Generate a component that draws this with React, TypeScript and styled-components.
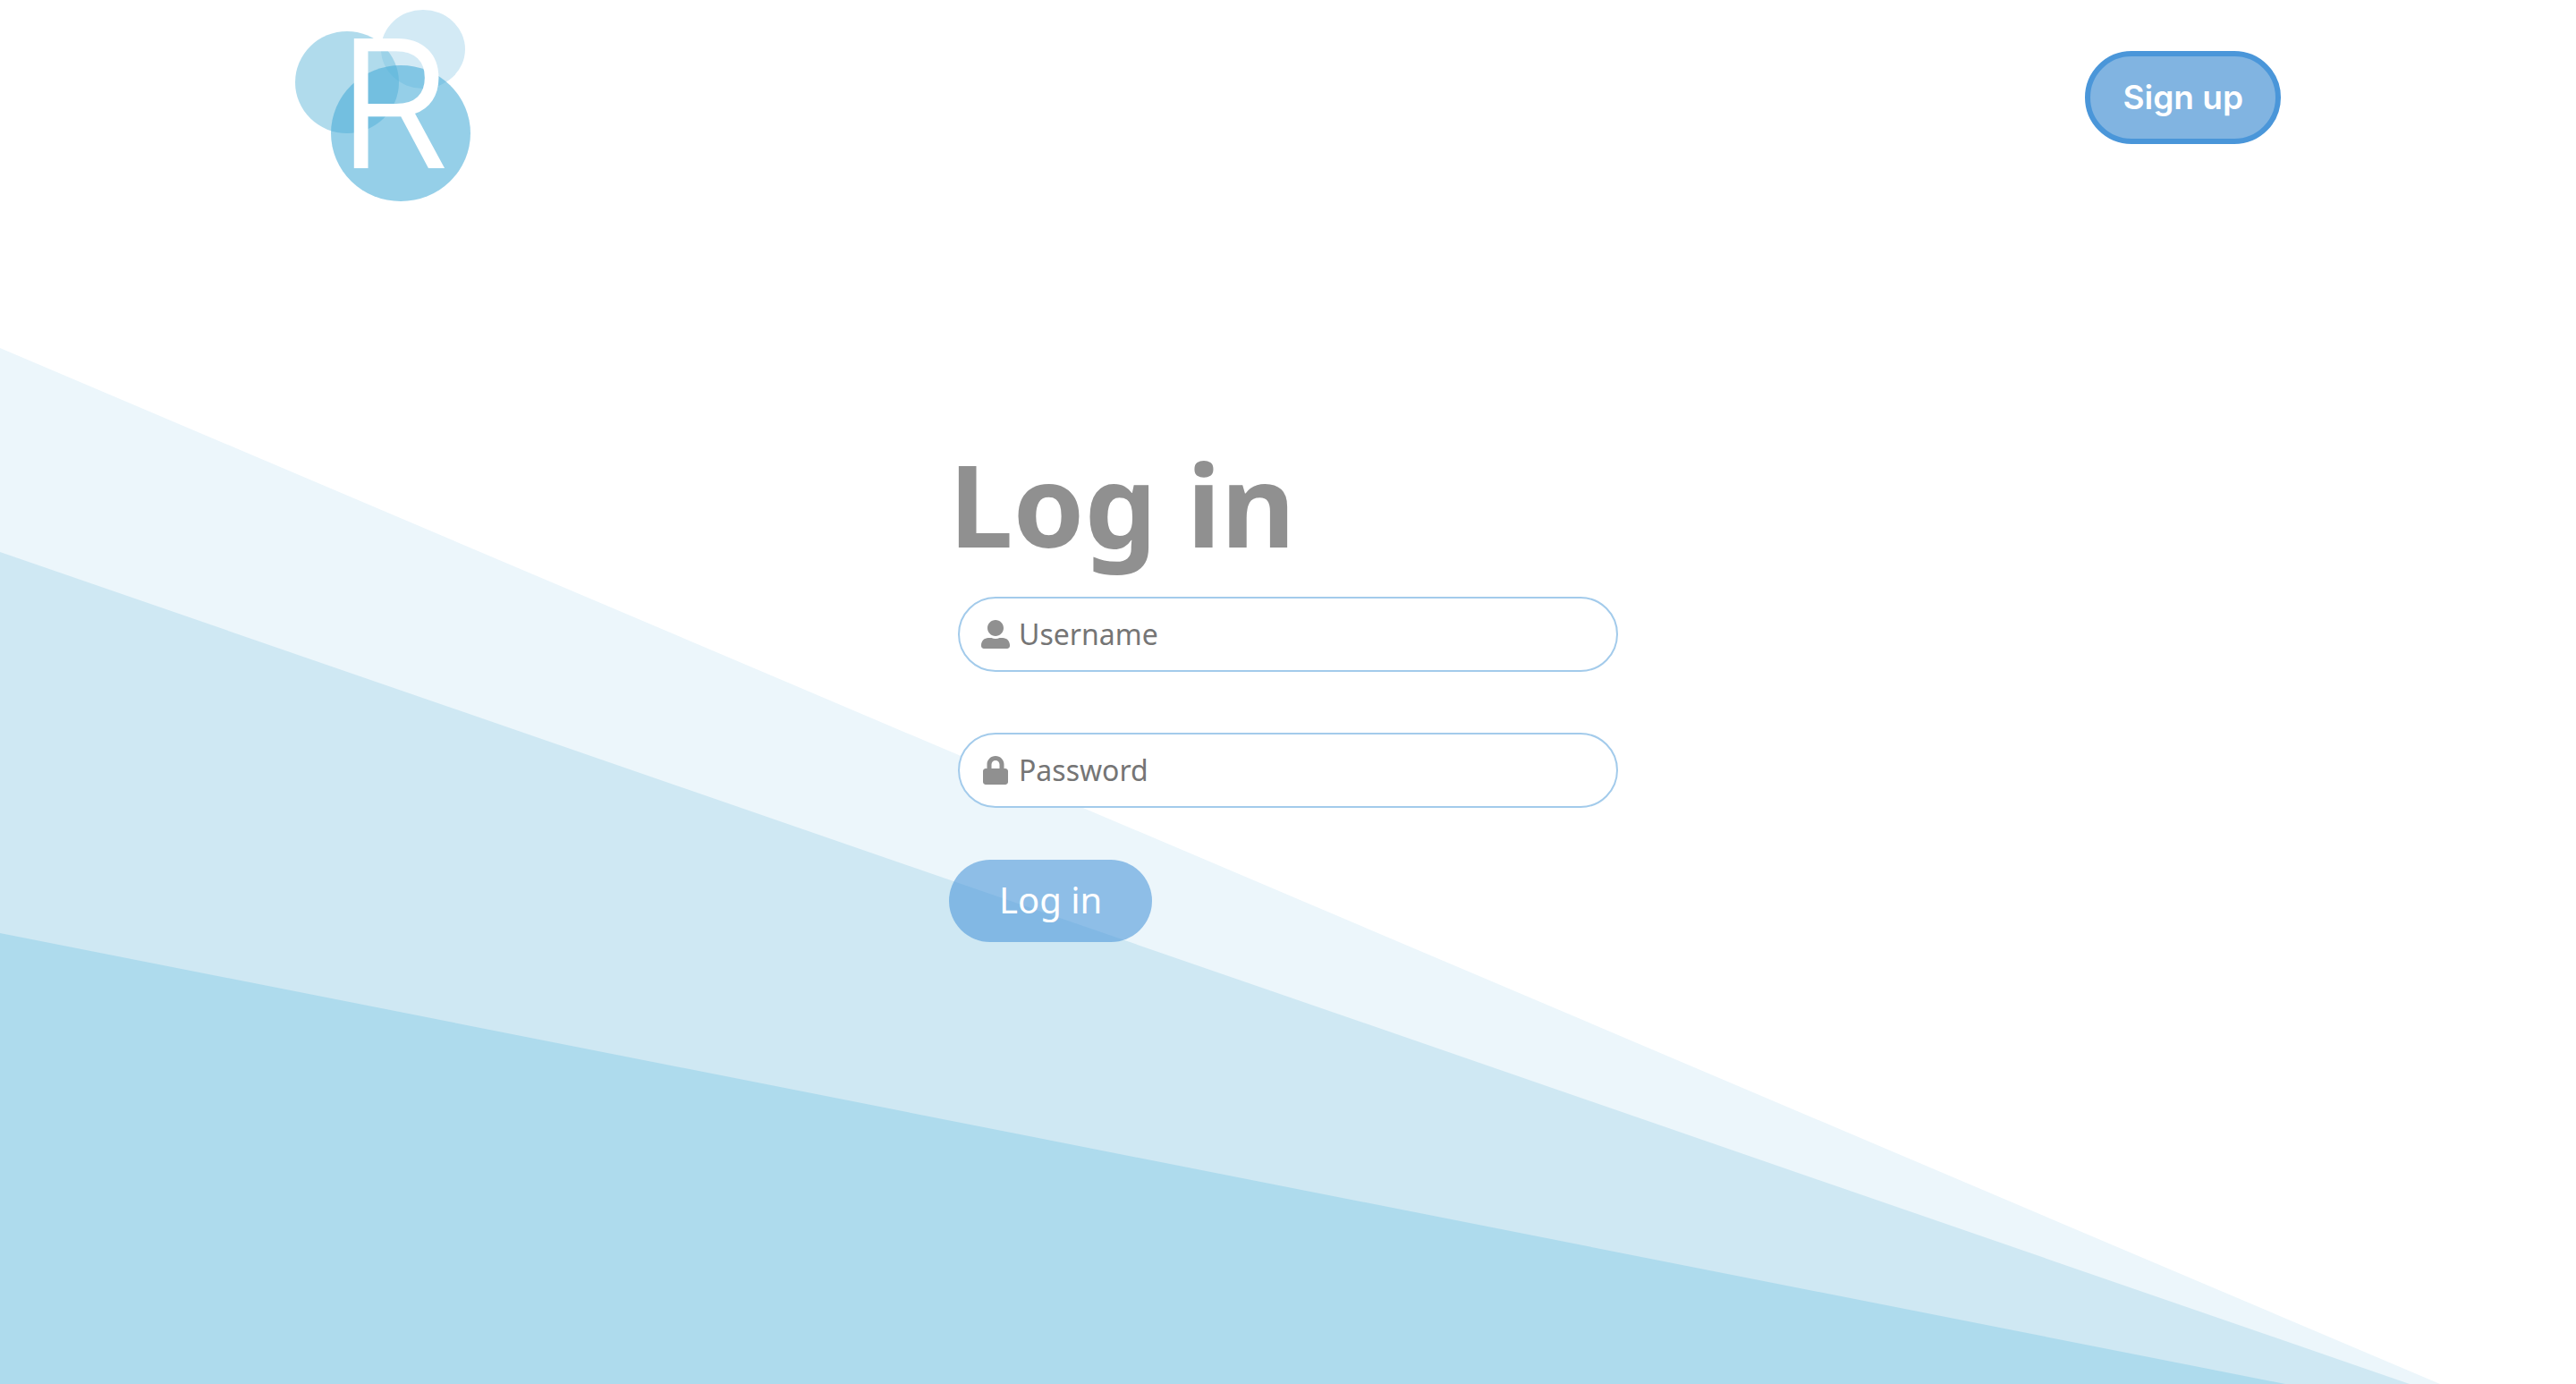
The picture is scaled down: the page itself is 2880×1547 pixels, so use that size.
import React from "react";
import styled, { createGlobalStyle } from "styled-components";
import { FaLock, FaUserAlt } from "react-icons/fa";

const GlobalStyle = createGlobalStyle`
  * { box-sizing: border-box; }
  body {
    margin: 0;
    background: #fff;
    font-family: "Noto Sans", "Open Sans", sans-serif;
  }
`;

const Page = styled.div`
  position: relative;
  isolation: isolate;
  display: flex;
  flex-direction: column;
  min-height: 100vh;
`;

const Backdrop = styled.svg`
  position: absolute;
  inset: 0;
  z-index: -1;
  width: 100%;
  height: 100%;
`;

const Header = styled.header`
  display: flex;
  justify-content: space-between;
  align-items: flex-start;
  width: 100%;
  max-width: 2220px;
  margin: 0 auto;
  padding-top: 11px;
`;

const LogoLink = styled.a`
  display: block;
  line-height: 0;
`;

const LogoArt = styled.svg`
  width: 196px;
  height: 214px;
  overflow: visible;
`;

const LogoLetter = styled.text`
  fill: #fff;
  stroke: #fff;
  stroke-width: 2px;
  font-family: Inter, sans-serif;
  font-size: 196px;
  font-weight: 300;
`;

const SignUpButton = styled.button`
  margin-top: 46px;
  padding: 22px 36px;
  border: 6px solid #4a96d9;
  border-radius: 52px;
  background: #81b4e1;
  color: #fff;
  font-family: Inter, sans-serif;
  font-size: 37px;
  font-weight: 600;
  line-height: 48px;
  cursor: pointer;
`;

const Main = styled.main`
  display: flex;
  justify-content: center;
  padding: 250px 24px 0;
`;

const LoginForm = styled.form`
  display: flex;
  flex-direction: column;
  align-items: flex-start;
  width: 100%;
  max-width: 758px;
`;

const Title = styled.h1`
  margin: 0 0 16px;
  color: #909090;
  font-size: 128px;
  font-weight: 700;
  line-height: 176px;
`;

const Fields = styled.div`
  display: flex;
  flex-direction: column;
  gap: 68px;
  align-self: stretch;
  padding: 0 10px;
`;

const Field = styled.label`
  display: flex;
  align-items: center;
  gap: 10px;
  height: 84px;
  padding: 0 24px;
  border: 2px solid #a3cbeb;
  border-radius: 42px;
  background: #fff;
  color: #909090;
  font-size: 32px;
`;

const FieldInput = styled.input`
  flex: 1;
  min-width: 0;
  padding: 0 0 2px;
  border: 0;
  outline: 0;
  background: transparent;
  color: #444;
  font: inherit;
  &::placeholder {
    color: #757575;
    opacity: 1;
  }
`;

const SubmitButton = styled.button`
  margin-top: 58px;
  padding: 17px 56px 19px;
  border: 0;
  border-radius: 46px;
  background: rgba(74, 150, 217, 0.58);
  color: #fff;
  font-family: inherit;
  font-size: 40px;
  line-height: 56px;
  cursor: pointer;
`;

function Logo() {
  return (
    <LogoArt viewBox="0 0 196 214" role="img" aria-label="R">
      <ellipse cx="143" cy="44" rx="47" ry="44" fill="#d3eaf5" />
      <ellipse cx="58" cy="81" rx="58" ry="57" fill="#6fbedd" fillOpacity="0.55" />
      <ellipse cx="118" cy="138" rx="78" ry="76" fill="#45abd6" fillOpacity="0.57" />
      <LogoLetter x="48" y="176">R</LogoLetter>
    </LogoArt>
  );
}

export default function App() {
  return (
    <Page>
      <GlobalStyle />
      <Backdrop viewBox="0 0 2880 1547" preserveAspectRatio="none" aria-hidden="true">
        <polygon points="0,389 2728,1547 0,1547" fill="#ecf6fb" />
        <polygon points="0,617 2694,1547 0,1547" fill="#cfe8f3" />
        <polygon points="0,1043 2555,1547 0,1547" fill="#aedbed" />
      </Backdrop>
      <Header>
        <LogoLink href="#">
          <Logo />
        </LogoLink>
        <SignUpButton type="button">Sign up</SignUpButton>
      </Header>
      <Main>
        <LoginForm onSubmit={(event) => event.preventDefault()}>
          <Title>Log in</Title>
          <Fields>
            <Field>
              <FaUserAlt size={32} aria-hidden="true" />
              <FieldInput type="text" placeholder="Username" aria-label="Username" />
            </Field>
            <Field>
              <FaLock size={32} aria-hidden="true" />
              <FieldInput type="password" placeholder="Password" aria-label="Password" />
            </Field>
          </Fields>
          <SubmitButton type="submit">Log in</SubmitButton>
        </LoginForm>
      </Main>
    </Page>
  );
}
